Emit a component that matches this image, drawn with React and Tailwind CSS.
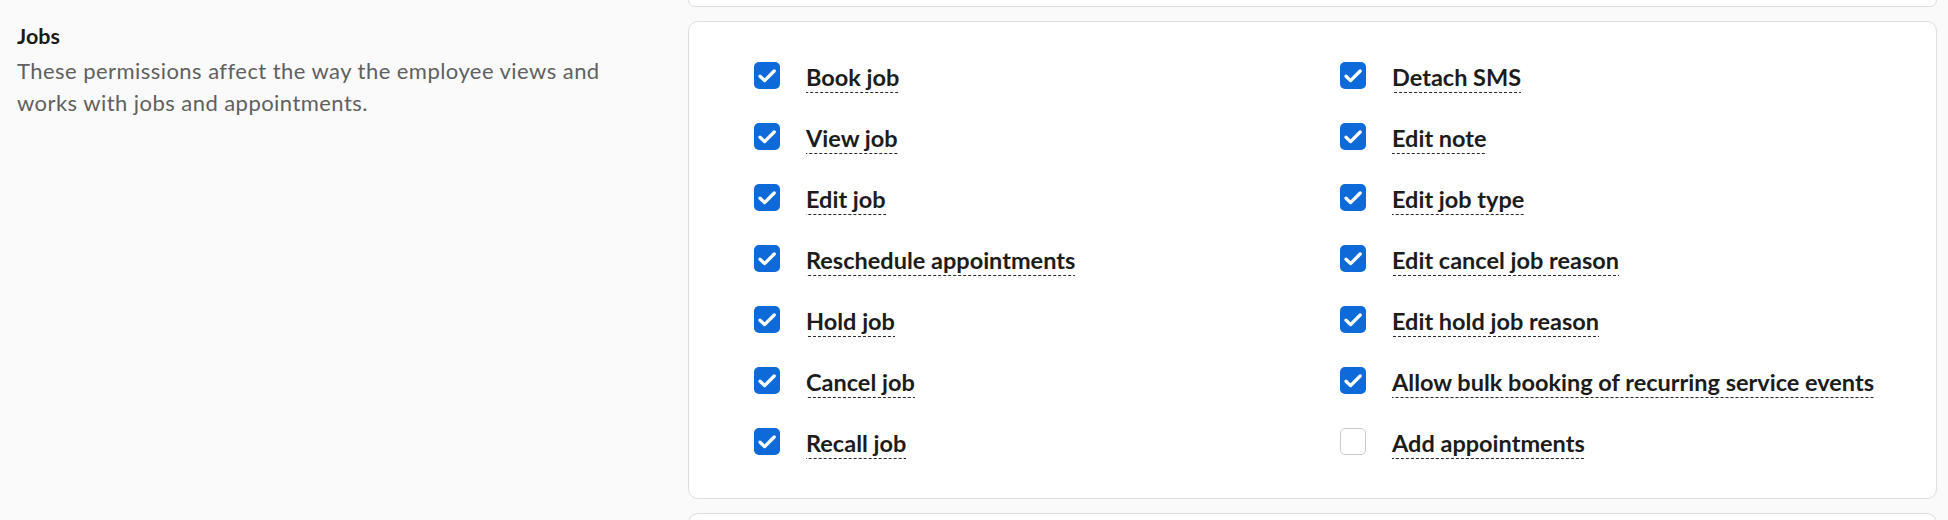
import { useState } from 'react'

const LEFT_PERMISSIONS = [
  { id: 'book', label: 'Book job', checked: true },
  { id: 'view', label: 'View job', checked: true },
  { id: 'edit', label: 'Edit job', checked: true },
  { id: 'reschedule', label: 'Reschedule appointments', checked: true },
  { id: 'hold', label: 'Hold job', checked: true },
  { id: 'cancel', label: 'Cancel job', checked: true },
  { id: 'recall', label: 'Recall job', checked: true },
]

const RIGHT_PERMISSIONS = [
  { id: 'sms', label: 'Detach SMS', checked: true },
  { id: 'note', label: 'Edit note', checked: true },
  { id: 'type', label: 'Edit job type', checked: true },
  { id: 'cancelReason', label: 'Edit cancel job reason', checked: true },
  { id: 'holdReason', label: 'Edit hold job reason', checked: true },
  { id: 'bulk', label: 'Allow bulk booking of recurring service events', checked: true },
  { id: 'addAppt', label: 'Add appointments', checked: false },
]

function Checkbox({ checked, onChange }) {
  return (
    <button
      type="button"
      onClick={onChange}
      className={
        checked
          ? 'w-[26px] h-[27px] shrink-0 rounded-[5px] bg-[#0f6ad9]'
          : 'w-[26px] h-[27px] shrink-0 rounded-[5px] bg-white border border-[#c9c9c9]'
      }
    >
      {checked && (
        <svg width="26" height="27" viewBox="0 0 26 27" fill="none" className="block">
          <path d="M6 14.2l4.6 4.4L20.2 9" stroke="white" strokeWidth="3.3" strokeLinecap="round" strokeLinejoin="round" />
        </svg>
      )}
    </button>
  )
}

function PermissionRow({ item, onToggle }) {
  return (
    <div className="flex items-start gap-[26px] h-[61px]">
      <Checkbox checked={item.checked} onChange={onToggle} />
      <span className="pb-[1px] text-[23.5px] leading-[30px] font-bold text-[#1c1c1c] whitespace-nowrap bg-[linear-gradient(to_right,#2a2a2a_3px,transparent_3px)] bg-[length:5px_1px] bg-repeat-x bg-bottom">
        {item.label}
      </span>
    </div>
  )
}

export default function App() {
  const [perms, setPerms] = useState(() => {
    const all = {}
    ;[...LEFT_PERMISSIONS, ...RIGHT_PERMISSIONS].forEach((p) => { all[p.id] = p.checked })
    return all
  })

  const toggle = (id) => setPerms((p) => ({ ...p, [id]: !p[id] }))

  return (
    <div className="min-h-screen bg-[#fafafa] overflow-hidden" style={{ fontFamily: 'Lato, "Noto Sans", sans-serif' }}>
      <div className="flex flex-col gap-[14px] h-[520px] overflow-hidden">
        {/* previous section, only its bottom edge shows */}
        <div className="flex shrink-0">
          <div className="w-[688px] shrink-0" />
          <div className="flex-1 mr-[11px] h-[7px] bg-white border-x border-b border-[#dedede] rounded-b-[10px]" />
        </div>

        <div className="flex shrink-0">
          <div className="w-[688px] shrink-0 pl-[17px] pt-[1px]">
            <h3 className="text-[21.5px] leading-[28px] font-bold text-[#1a1a1a]">Jobs</h3>
            <p className="mt-[5px] w-[612px] text-[22px] leading-[32px] tracking-[0.45px] text-[#606060]">
              These permissions affect the way the employee views and works with jobs and appointments.
            </p>
          </div>
          <div className="flex-1 mr-[11px] bg-white border border-[#dedede] rounded-[10px] pt-[40px] pb-[9px] pl-[65px]">
            <div className="grid grid-cols-[586px_1fr]">
              <div className="flex flex-col">
                {LEFT_PERMISSIONS.map((item) => (
                  <PermissionRow key={item.id} item={{ ...item, checked: perms[item.id] }} onToggle={() => toggle(item.id)} />
                ))}
              </div>
              <div className="flex flex-col">
                {RIGHT_PERMISSIONS.map((item) => (
                  <PermissionRow key={item.id} item={{ ...item, checked: perms[item.id] }} onToggle={() => toggle(item.id)} />
                ))}
              </div>
            </div>
          </div>
        </div>

        {/* next section, only its top edge shows */}
        <div className="flex shrink-0">
          <div className="w-[688px] shrink-0" />
          <div className="flex-1 mr-[11px] h-[30px] bg-white border-x border-t border-[#dedede] rounded-t-[10px]" />
        </div>
      </div>
    </div>
  )
}
